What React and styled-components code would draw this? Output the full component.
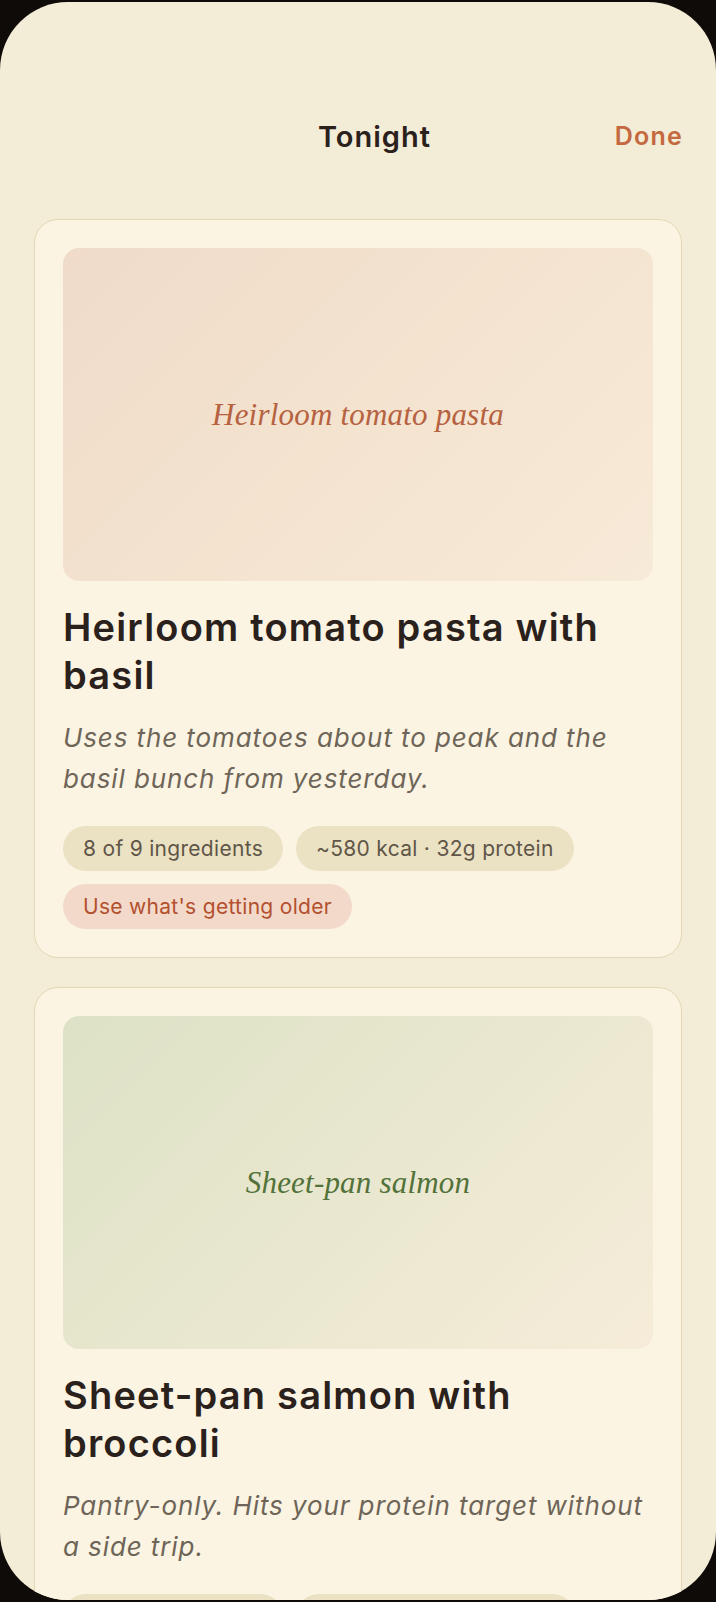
import React from "react";
import styled, { createGlobalStyle } from "styled-components";

const GlobalStyle = createGlobalStyle`
  html, body {
    margin: 0;
    padding: 0;
    background: #0f0b09;
  }
  * {
    box-sizing: border-box;
  }
`;

const Screen = styled.div`
  margin-top: 2px;
  height: 1598px;
  border-radius: 68px;
  overflow: hidden;
  background: #f3ecd6;
  font-family: "Inter", "Noto Sans", sans-serif;
  color: #2b211c;
`;

const Header = styled.header`
  display: flex;
  align-items: center;
  height: 56px;
  margin-top: 106px;
  padding: 0 33px 0 34px;
`;

const HeaderSpacer = styled.div`
  width: 100px;
`;

const Title = styled.h1`
  flex: 1;
  margin: 0;
  text-align: center;
  font-size: 29px;
  font-weight: 600;
  letter-spacing: 1px;
`;

const DoneButton = styled.button`
  border: none;
  background: none;
  padding: 0;
  font-family: inherit;
  font-size: 25px;
  font-weight: 600;
  letter-spacing: 1.2px;
  color: #c4683f;
  cursor: pointer;
`;

const List = styled.div`
  display: flex;
  flex-direction: column;
  gap: 29px;
  padding: 55px 34px 0;
`;

const Card = styled.article`
  background: #fbf4e2;
  border: 1.5px solid #e4d7b6;
  border-radius: 24px;
  padding: 28px;
`;

const Photo = styled.div`
  height: 333px;
  border-radius: 16px;
  display: flex;
  align-items: center;
  justify-content: center;
  background: ${({ $tone }) =>
    $tone === "green"
      ? "linear-gradient(135deg, #dde2c6 0%, #e9e7cf 50%, #f6ecd9 100%)"
      : "linear-gradient(135deg, #f0dbc9 0%, #f3e3cf 50%, #f8ead8 100%)"};
`;

const PhotoLabel = styled.span`
  font-family: "Liberation Serif", "DejaVu Serif", serif;
  font-style: italic;
  font-size: 31px;
  letter-spacing: 0.2px;
  color: ${({ $tone }) => ($tone === "green" ? "#52723a" : "#b6613f")};
`;

const DishName = styled.h2`
  margin: 22px 0 0;
  font-size: 38px;
  line-height: 48px;
  font-weight: 600;
  letter-spacing: 1.2px;
  color: #2b211c;
`;

const Note = styled.p`
  margin: 18px 0 0;
  font-size: 26px;
  line-height: 41px;
  font-style: italic;
  letter-spacing: 0.9px;
  color: #6e6558;
`;

const Chips = styled.div`
  display: flex;
  flex-wrap: wrap;
  gap: 13px;
  margin-top: 27px;
`;

const Chip = styled.span`
  display: inline-flex;
  align-items: center;
  height: 45px;
  padding: 0 20px;
  border-radius: 23px;
  font-size: 21px;
  letter-spacing: 0.3px;
  background: ${({ $warm }) => ($warm ? "#f2d9c9" : "#ebe1c3")};
  color: ${({ $warm }) => ($warm ? "#b2502f" : "#5f5648")};
`;

const meals = [
  {
    label: "Heirloom tomato pasta",
    tone: "red",
    name: "Heirloom tomato pasta with basil",
    note: "Uses the tomatoes about to peak and the basil bunch from yesterday.",
    chips: ["8 of 9 ingredients", "~580 kcal · 32g protein"],
    warm: "Use what's getting older",
  },
  {
    label: "Sheet-pan salmon",
    tone: "green",
    name: "Sheet-pan salmon with broccoli",
    note: "Pantry-only. Hits your protein target without a side trip.",
    chips: ["9 of 9 ingredients", "~640 kcal · 45g protein"],
  },
];

export default function App() {
  return (
    <>
      <GlobalStyle />
      <Screen>
        <Header>
          <HeaderSpacer />
          <Title>Tonight</Title>
          <DoneButton>Done</DoneButton>
        </Header>
        <List>
          {meals.map((m) => (
            <Card key={m.name}>
              <Photo $tone={m.tone}>
                <PhotoLabel $tone={m.tone}>{m.label}</PhotoLabel>
              </Photo>
              <DishName>{m.name}</DishName>
              <Note>{m.note}</Note>
              <Chips>
                {m.chips.map((c) => (
                  <Chip key={c}>{c}</Chip>
                ))}
                {m.warm && <Chip $warm>{m.warm}</Chip>}
              </Chips>
            </Card>
          ))}
        </List>
      </Screen>
    </>
  );
}
